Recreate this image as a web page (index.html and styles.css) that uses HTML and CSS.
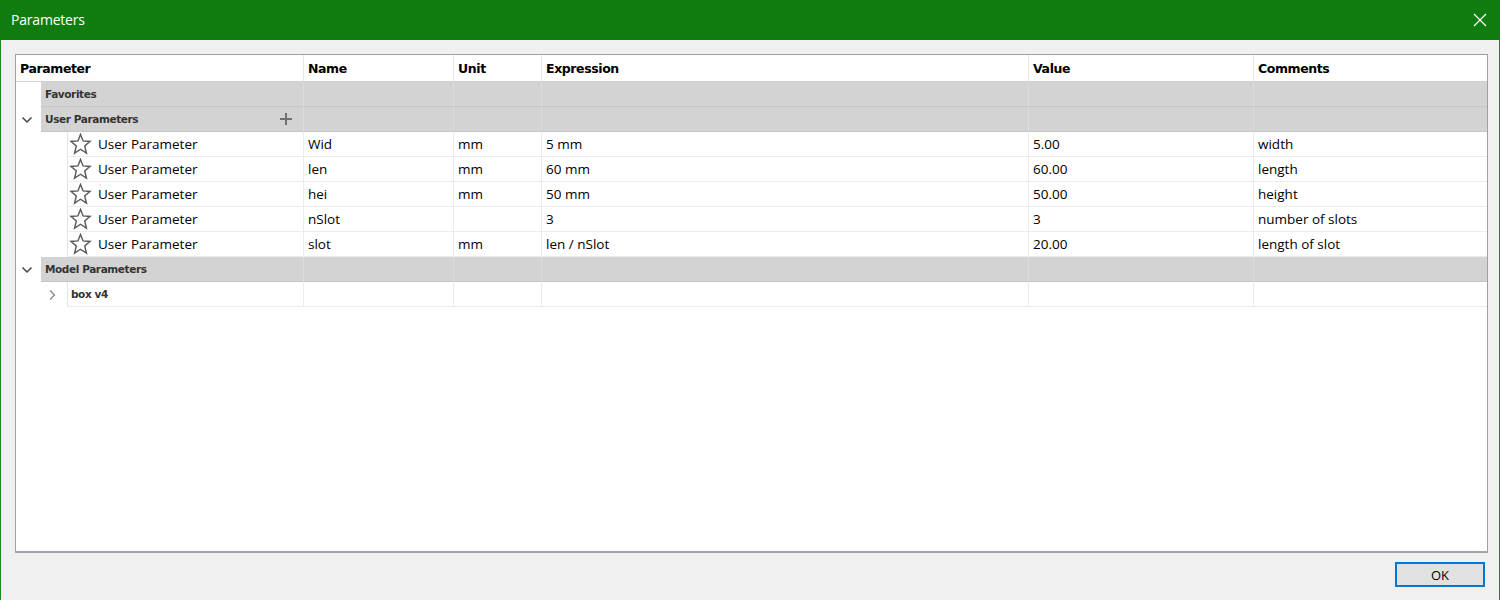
FILE: index.html
```html
<!DOCTYPE html>
<html>
<head>
<meta charset="utf-8">
<link rel="stylesheet" href="styles.css">
</head>
<body>
<div class="window">
  <div class="titlebar">
    <span class="title">Parameters</span>
    <svg class="close" width="14" height="14" viewBox="0 0 14 14"><path d="M1 1 L13 13 M13 1 L1 13" stroke="#fff" stroke-width="1.2" fill="none"/></svg>
  </div>
  <div class="content">
    <div class="table">
      <div class="row head">
        <div class="cell">Parameter</div>
        <div class="cell">Name</div>
        <div class="cell">Unit</div>
        <div class="cell">Expression</div>
        <div class="cell">Value</div>
        <div class="cell last">Comments</div>
      </div>

      <div class="row group">
        <div class="cell first"><span class="gutter g1"></span><span class="glabel">Favorites</span></div>
        <div class="cell"></div><div class="cell"></div><div class="cell"></div><div class="cell"></div><div class="cell last"></div>
      </div>

      <div class="row group">
        <div class="cell first"><span class="gutter g1"><svg class="chev" width="12" height="8" viewBox="0 0 12 8"><path d="M1.5 1.5 L6 6 L10.5 1.5" stroke="#444" stroke-width="1.5" fill="none"/></svg></span><span class="glabel">User Parameters<svg class="plus" width="12" height="12" viewBox="0 0 12 12"><path d="M6 0 V12 M0 6 H12" stroke="#707070" stroke-width="2"/></svg></span></div>
        <div class="cell"></div><div class="cell"></div><div class="cell"></div><div class="cell"></div><div class="cell last"></div>
      </div>

      <div class="row data">
        <div class="cell first"><span class="gutter g2"></span><span class="dlabel"><svg class="star" width="23" height="22" viewBox="0 0 24 23"><polygon points="12,1.5 14.7,8.3 22,8.8 16.4,13.6 18.2,21 12,17 5.8,21 7.6,13.6 2,8.8 9.3,8.3" stroke="#5a5a5a" stroke-width="1.5" fill="none" stroke-linejoin="miter"/></svg>User Parameter</span></div>
        <div class="cell">Wid</div><div class="cell">mm</div><div class="cell">5 mm</div><div class="cell">5.00</div><div class="cell last">width</div>
      </div>
      <div class="row data">
        <div class="cell first"><span class="gutter g2"></span><span class="dlabel"><svg class="star" width="23" height="22" viewBox="0 0 24 23"><polygon points="12,1.5 14.7,8.3 22,8.8 16.4,13.6 18.2,21 12,17 5.8,21 7.6,13.6 2,8.8 9.3,8.3" stroke="#5a5a5a" stroke-width="1.5" fill="none" stroke-linejoin="miter"/></svg>User Parameter</span></div>
        <div class="cell">len</div><div class="cell">mm</div><div class="cell">60 mm</div><div class="cell">60.00</div><div class="cell last">length</div>
      </div>
      <div class="row data">
        <div class="cell first"><span class="gutter g2"></span><span class="dlabel"><svg class="star" width="23" height="22" viewBox="0 0 24 23"><polygon points="12,1.5 14.7,8.3 22,8.8 16.4,13.6 18.2,21 12,17 5.8,21 7.6,13.6 2,8.8 9.3,8.3" stroke="#5a5a5a" stroke-width="1.5" fill="none" stroke-linejoin="miter"/></svg>User Parameter</span></div>
        <div class="cell">hei</div><div class="cell">mm</div><div class="cell">50 mm</div><div class="cell">50.00</div><div class="cell last">height</div>
      </div>
      <div class="row data">
        <div class="cell first"><span class="gutter g2"></span><span class="dlabel"><svg class="star" width="23" height="22" viewBox="0 0 24 23"><polygon points="12,1.5 14.7,8.3 22,8.8 16.4,13.6 18.2,21 12,17 5.8,21 7.6,13.6 2,8.8 9.3,8.3" stroke="#5a5a5a" stroke-width="1.5" fill="none" stroke-linejoin="miter"/></svg>User Parameter</span></div>
        <div class="cell">nSlot</div><div class="cell"></div><div class="cell">3</div><div class="cell">3</div><div class="cell last">number of slots</div>
      </div>
      <div class="row data">
        <div class="cell first"><span class="gutter g2"></span><span class="dlabel"><svg class="star" width="23" height="22" viewBox="0 0 24 23"><polygon points="12,1.5 14.7,8.3 22,8.8 16.4,13.6 18.2,21 12,17 5.8,21 7.6,13.6 2,8.8 9.3,8.3" stroke="#5a5a5a" stroke-width="1.5" fill="none" stroke-linejoin="miter"/></svg>User Parameter</span></div>
        <div class="cell">slot</div><div class="cell">mm</div><div class="cell">len / nSlot</div><div class="cell">20.00</div><div class="cell last">length of slot</div>
      </div>

      <div class="row group">
        <div class="cell first"><span class="gutter g1"><svg class="chev" width="12" height="8" viewBox="0 0 12 8"><path d="M1.5 1.5 L6 6 L10.5 1.5" stroke="#444" stroke-width="1.5" fill="none"/></svg></span><span class="glabel">Model Parameters</span></div>
        <div class="cell"></div><div class="cell"></div><div class="cell"></div><div class="cell"></div><div class="cell last"></div>
      </div>

      <div class="row data">
        <div class="cell first"><span class="gutter g2"><svg class="chevr" width="8" height="12" viewBox="0 0 8 12"><path d="M2 1.5 L6.5 6 L2 10.5" stroke="#888" stroke-width="1.3" fill="none"/></svg></span><span class="dlabel box">box v4</span></div>
        <div class="cell"></div><div class="cell"></div><div class="cell"></div><div class="cell"></div><div class="cell last"></div>
      </div>
    </div>
    <div class="footer">
      <button class="ok">OK</button>
    </div>
  </div>
</div>
</body>
</html>
```
FILE: styles.css
```css
* { box-sizing: border-box; }
html, body { margin: 0; padding: 0; }
body {
  width: 1500px;
  height: 600px;
  overflow: hidden;
  background: #f0f0f0;
  font-family: "Open Sans", "Noto Sans", sans-serif;
}
.window {
  width: 1500px;
  height: 600px;
  border-left: 1px solid #1e8a1e;
  border-right: 1px solid #1e8a1e;
  background: #f0f0f0;
  display: flex;
  flex-direction: column;
}
.titlebar {
  height: 40px;
  background: #107c10;
  display: flex;
  align-items: center;
  justify-content: space-between;
  padding: 0 12px 0 11px;
  margin-left: -1px;
  margin-right: -1px;
}
.title {
  color: #fff;
  font-family: "Open Sans", sans-serif;
  font-size: 14px;
  letter-spacing: -0.2px;
  padding-bottom: 1px;
}
.close { display: block; margin-right: 1px; }
.content {
  padding: 14px 11px 0 14px;
  display: flex;
  flex-direction: column;
}
.table {
  height: 499px;
  background: #fff;
  border: 1px solid #a0a0a0;
  border-bottom: 2px solid #a2a6ad;
}
.row {
  display: grid;
  grid-template-columns: 288px 150px 88px 487px 225px 1fr;
  height: 25px;
}
.cell {
  border-right: 1px solid #ececec;
  padding-left: 4px;
  display: flex;
  align-items: center;
  font-size: 13.5px;
  color: #000;
  white-space: nowrap;
  overflow: hidden;
}
.cell.last { border-right: none; }
.row.head { height: 27px; }
.row.head .cell {
  font-family: "DejaVu Sans", Verdana, sans-serif;
  font-weight: bold;
  font-size: 12.5px;
  letter-spacing: -0.4px;
  color: #000;
  border-bottom: 1px solid #d0d0d0;
  border-right-color: #e6e6e6;
  padding-top: 1px;
}
.row.group .cell {
  background: #d3d3d3;
  border-bottom: 1px solid #c6c6c6;
  border-right-color: #dcdcdc;
}
.row.data .cell {
  border-bottom: 1px solid #ececec;
}
.cell.first {
  padding-left: 0;
  align-items: stretch;
}
.row.group .cell.first, .row.data .cell.first {
  background: transparent;
  border-bottom: none;
}
.gutter {
  flex: none;
  display: flex;
  align-items: center;
  background: #fff;
}
.g1 { width: 25px; padding-left: 5px; }
.g2 { width: 51px; justify-content: flex-end; padding-right: 11px; }
.glabel {
  flex: 1;
  background: #d3d3d3;
  border-bottom: 1px solid #c6c6c6;
  display: flex;
  align-items: center;
  justify-content: space-between;
  padding-left: 4px;
  padding-right: 11px;
  font-family: "DejaVu Sans", Verdana, sans-serif;
  font-weight: bold;
  font-size: 10.5px;
  color: #333;
  letter-spacing: -0.4px;
}
.dlabel {
  flex: 1;
  border-left: 1px solid #e4e4e4;
  border-bottom: 1px solid #ececec;
  display: flex;
  align-items: center;
  padding-left: 1px;
  font-size: 13.5px;
  color: #000;
}
.dlabel.box {
  padding-left: 3px;
  font-family: "DejaVu Sans", Verdana, sans-serif;
  font-weight: bold;
  font-size: 10.5px;
  letter-spacing: -0.4px;
  color: #333;
}
.star { display: block; margin-right: 6px; margin-top: -1px; }
.chev { display: block; }
.chevr { display: block; }
.plus { display: block; }
.footer {
  display: flex;
  justify-content: flex-end;
  padding-top: 9px;
  padding-right: 3px;
}
.ok {
  width: 90px;
  height: 25px;
  border: 2px solid #0078d7;
  background: #e1e1e1;
  font-family: "Open Sans", sans-serif;
  font-size: 13px;
  color: #000;
  padding: 0;
  margin: 0;
}
```
